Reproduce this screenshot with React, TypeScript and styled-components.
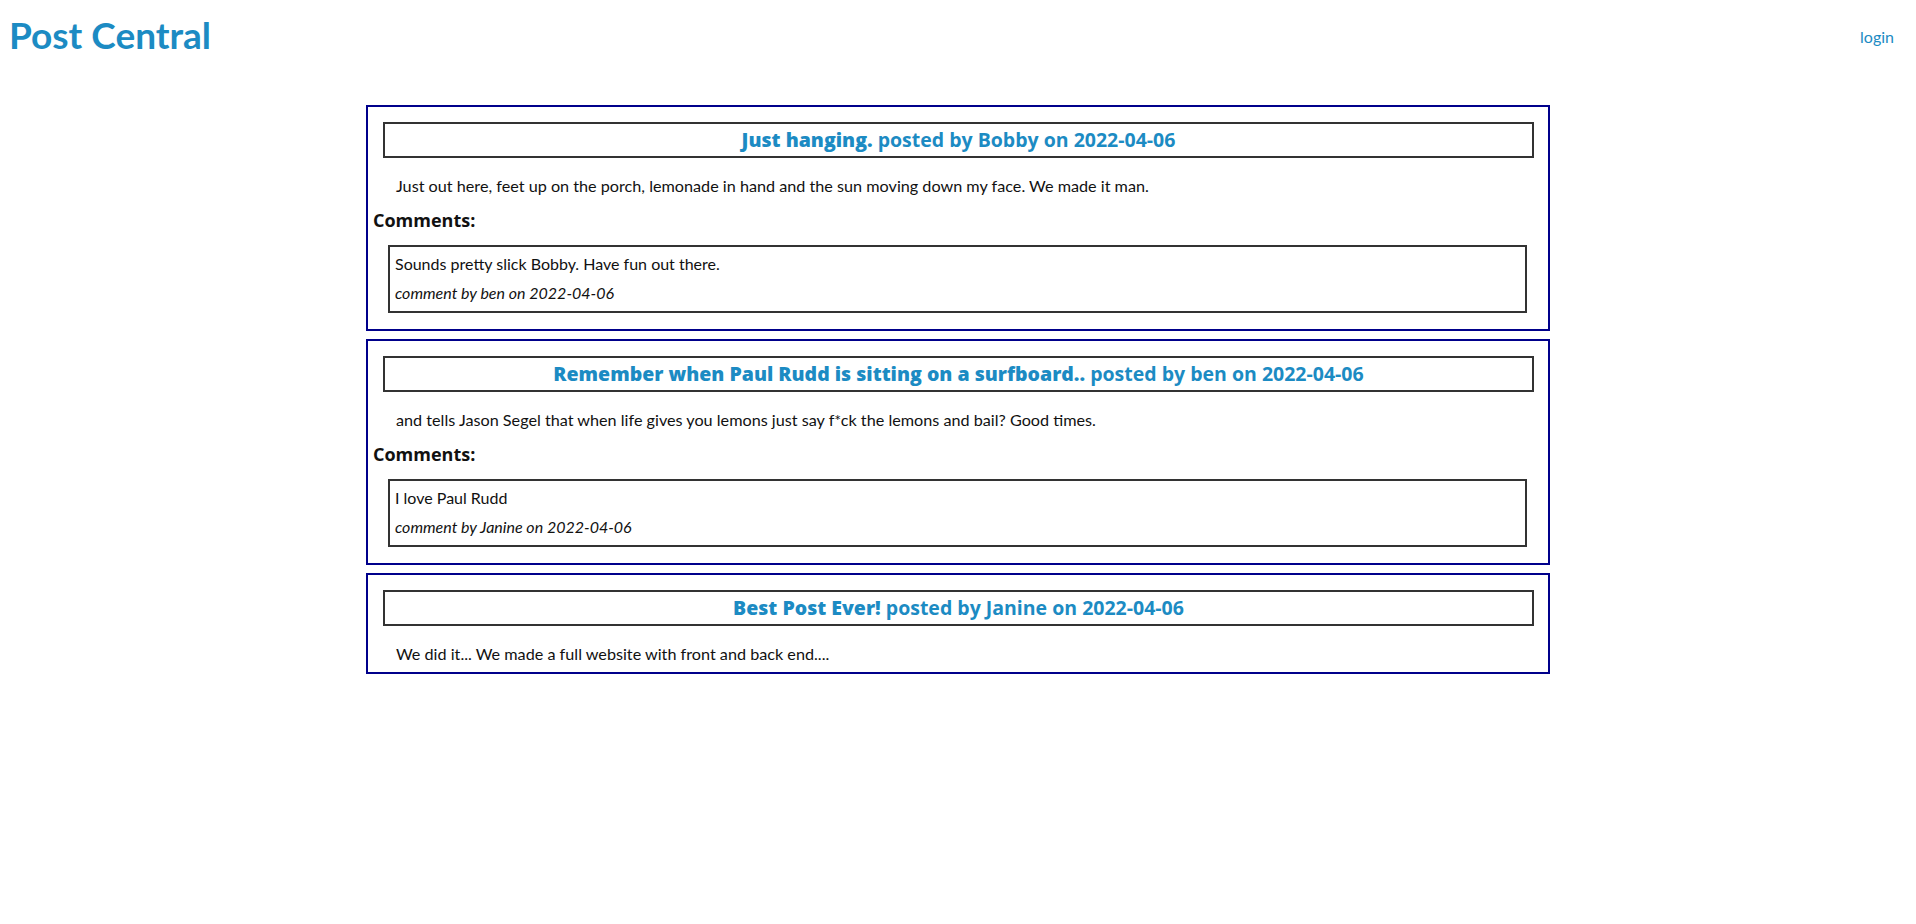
import React from 'react';
import styled, { createGlobalStyle } from 'styled-components';

interface Comment {
  id: number;
  body: string;
  author: string;
  date: string;
}

interface Post {
  id: number;
  title: string;
  author: string;
  date: string;
  body: string;
  comments: Comment[];
}

const posts: Post[] = [
  {
    id: 1,
    title: 'Just hanging.',
    author: 'Bobby',
    date: '2022-04-06',
    body: 'Just out here, feet up on the porch, lemonade in hand and the sun moving down my face. We made it man.',
    comments: [
      { id: 1, body: 'Sounds pretty slick Bobby. Have fun out there.', author: 'ben', date: '2022-04-06' },
    ],
  },
  {
    id: 2,
    title: 'Remember when Paul Rudd is sitting on a surfboard..',
    author: 'ben',
    date: '2022-04-06',
    body: 'and tells Jason Segel that when life gives you lemons just say f*ck the lemons and bail? Good times.',
    comments: [{ id: 2, body: 'I love Paul Rudd', author: 'Janine', date: '2022-04-06' }],
  },
  {
    id: 3,
    title: 'Best Post Ever!',
    author: 'Janine',
    date: '2022-04-06',
    body: 'We did it... We made a full website with front and back end....',
    comments: [],
  },
];

const App = () => {
  return (
    <>
      <GlobalStyle />
      <NavBar>
        <Logo>Post Central</Logo>
        <LoginLink href="#">login</LoginLink>
      </NavBar>
      <PostList>
        {posts.map((post) => (
          <PostCard key={post.id}>
            <PostHeader>
              <strong>{post.title}</strong> posted by {post.author} on {post.date}
            </PostHeader>
            <PostBody>{post.body}</PostBody>
            {post.comments.length > 0 && (
              <>
                <CommentsTitle>Comments:</CommentsTitle>
                {post.comments.map((c) => (
                  <CommentBox key={c.id}>
                    <CommentText>{c.body}</CommentText>
                    <CommentMeta>
                      comment by {c.author} on {c.date}
                    </CommentMeta>
                  </CommentBox>
                ))}
              </>
            )}
          </PostCard>
        ))}
      </PostList>
    </>
  );
};

export default App;

const GlobalStyle = createGlobalStyle`
  body {
    margin: 0;
    background: #ffffff;
    font-family: Lato, 'Open Sans', sans-serif;
    color: #111111;
  }
`;

const NavBar = styled.div`
  display: flex;
  flex-direction: row;
  justify-content: space-between;
  align-items: flex-start;
  padding: 0 22px 0 9px;
`;

const Logo = styled.h1`
  margin: 12px 0 0 0;
  font-size: 37px;
  font-weight: 700;
  color: #1c8bc3;
`;

const LoginLink = styled.a`
  margin-top: 27px;
  font-size: 16px;
  color: #1c8bc3;
  text-decoration: none;
`;

const PostList = styled.div`
  width: 1184px;
  margin: 48px auto 0 auto;
  display: flex;
  flex-direction: column;
  gap: 8px;
`;

const PostCard = styled.div`
  border: 2px solid #00008b;
  padding: 15px 5px 7px 5px;
`;

const PostHeader = styled.h3`
  margin: 0 9px 0 10px;
  border: 2px solid #333333;
  padding: 3px 0;
  text-align: center;
  font-family: 'Open Sans', Lato, sans-serif;
  font-size: 19.5px;
  line-height: 26px;
  font-weight: 700;
  color: #1c8bc3;

  strong {
    font-weight: 800;
  }
`;

const PostBody = styled.p`
  margin: 17px 0 0 23px;
  font-size: 16.2px;
  line-height: 22px;
`;

const CommentsTitle = styled.h3`
  margin: 11px 0 0 0;
  font-family: 'Open Sans', Lato, sans-serif;
  font-size: 18px;
  font-weight: 700;
  line-height: 25px;
`;

const CommentBox = styled.div`
  margin: 12px 16px 9px 15px;
  border: 2px solid #333333;
  padding: 5px 5px 6px 5px;
`;

const CommentText = styled.p`
  margin: 0;
  font-size: 16px;
  line-height: 24px;
`;

const CommentMeta = styled.p`
  margin: 5px 0 0 0;
  font-size: 16px;
  line-height: 24px;
  font-style: italic;
`;
